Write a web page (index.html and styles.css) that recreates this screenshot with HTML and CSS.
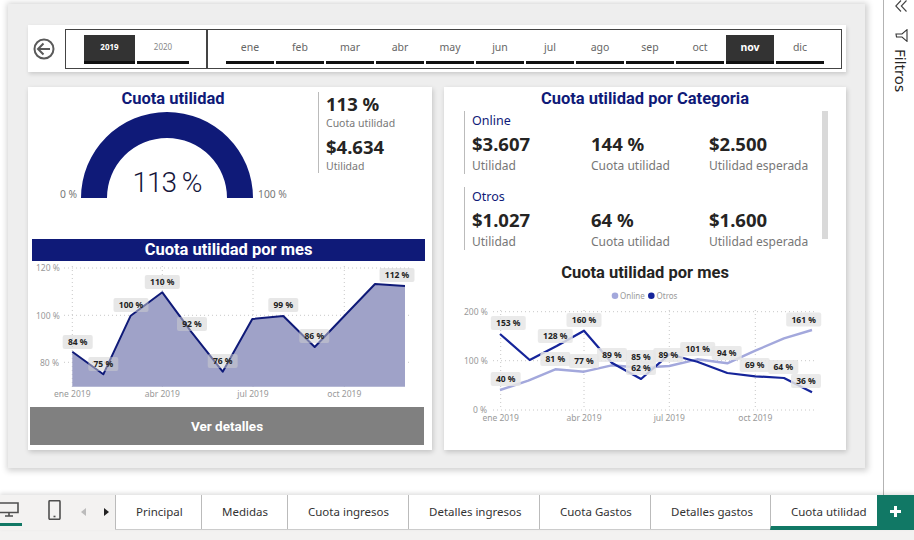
FILE: index.html
```html
<!DOCTYPE html>
<html lang="es">
<head>
<meta charset="utf-8">
<title>Cuota utilidad</title>
<link rel="stylesheet" href="styles.css">
</head>
<body>
<div class="app">
  <div class="main">
    <div class="stage">
      <div class="page">
        <div class="slicer-bar">
          <svg class="back" viewBox="0 0 22 22" width="22" height="22"><circle cx="11" cy="11" r="9.500"/><path d="M17 11H5.500M10.500 5.500 5 11l5.500 5.500"/></svg>
          <div class="slicer-box">
            <div class="years">
              <div class="tile on">2019</div>
              <div class="tile small">2020</div>
            </div>
            <div class="months">
              <div class="tile">ene</div><div class="tile">feb</div><div class="tile">mar</div><div class="tile">abr</div><div class="tile">may</div><div class="tile">jun</div><div class="tile">jul</div><div class="tile">ago</div><div class="tile">sep</div><div class="tile">oct</div><div class="tile on">nov</div><div class="tile">dic</div>
            </div>
          </div>
        </div>
        <div class="panels">
          <section class="panel left">
            <div class="top-row">
              <div class="gauge-col">
                <h2 class="title navy">Cuota utilidad</h2>
                <div class="gauge">
                  <span class="gauge-min">0 %</span>
                  <svg class="gauge-svg" viewBox="0 0 172 87" width="172" height="87"><path d="M0 87A86 86 0 0 1 172 87H146A60 60 0 0 0 26 87Z"/></svg>
                  <span class="gauge-max">100 %</span>
                  <span class="gauge-val">113 %</span>
                </div>
              </div>
              <div class="kpis">
                <div class="big">113 %</div>
                <div class="cap">Cuota utilidad</div>
                <div class="big second">$4.634</div>
                <div class="cap">Utilidad</div>
              </div>
            </div>
            <h2 class="banner">Cuota utilidad por mes</h2>
            <svg class="chart chart-a" viewBox="30 262 395 143" width="395" height="143">
              <g class="grid">
                <path d="M64 268H412M64 315.300H412M64 362.300H412M72.300 266V387M162.300 266V387M253 266V387M344.300 266V387"/>
              </g>
              <g class="axis">
                <text x="36" y="271">120 %</text><text x="36" y="318.500">100 %</text><text x="40" y="365.500">80 %</text>
                <text class="mid" x="72.300" y="397">ene 2019</text><text class="mid" x="162.300" y="397">abr 2019</text><text class="mid" x="253" y="397">jul 2019</text><text class="mid" x="344.300" y="397">oct 2019</text>
              </g>
              <path class="area" d="M72.300 351.700 103.300 374.300 130.700 315.700 162.300 292.300 191.700 332.300 222.700 371.700 252.300 319 283.300 316 314.700 347 344.300 316 375 284 405 286V386.700H72.300Z"/>
              <path class="line navy-line" d="M72.300 351.700 103.300 374.300 130.700 315.700 162.300 292.300 191.700 332.300 222.700 371.700 252.300 319 283.300 316 314.700 347 344.300 316 375 284 405 286"/>
              <g class="labels soft">
                <rect x="62.700" y="335" width="30" height="14" rx="2"/><text x="77.700" y="345">84 %</text>
                <rect x="88.300" y="357" width="30" height="14" rx="2"/><text x="103.300" y="367">75 %</text>
                <rect x="113.500" y="298" width="35" height="14" rx="2"/><text x="131" y="308">100 %</text>
                <rect x="144.800" y="275" width="35" height="14" rx="2"/><text x="162.300" y="285">110 %</text>
                <rect x="177" y="317" width="30" height="14" rx="2"/><text x="192" y="327">92 %</text>
                <rect x="207.700" y="354" width="30" height="14" rx="2"/><text x="222.700" y="364">76 %</text>
                <rect x="268.300" y="298" width="30" height="14" rx="2"/><text x="283.300" y="308">99 %</text>
                <rect x="299.300" y="329" width="30" height="14" rx="2"/><text x="314.300" y="339">86 %</text>
                <rect x="379.500" y="268" width="35" height="14" rx="2"/><text x="397" y="278">112 %</text>
              </g>
            </svg>
            <button class="details" type="button">Ver detalles</button>
          </section>
          <section class="panel right">
            <h2 class="title navy">Cuota utilidad por Categoria</h2>
            <div class="cats">
              <div class="cat-list">
                <div class="cat">
                  <div class="cat-name">Online</div>
                  <div class="cat-grid">
                    <div><div class="big">$3.607</div><div class="cap wide">Utilidad</div></div>
                    <div><div class="big">144 %</div><div class="cap wide">Cuota utilidad</div></div>
                    <div><div class="big">$2.500</div><div class="cap wide">Utilidad esperada</div></div>
                  </div>
                </div>
                <div class="cat">
                  <div class="cat-name">Otros</div>
                  <div class="cat-grid">
                    <div><div class="big">$1.027</div><div class="cap wide">Utilidad</div></div>
                    <div><div class="big">64 %</div><div class="cap wide">Cuota utilidad</div></div>
                    <div><div class="big">$1.600</div><div class="cap wide">Utilidad esperada</div></div>
                  </div>
                </div>
              </div>
              <div class="scrollbar"></div>
            </div>
            <h2 class="title dark">Cuota utilidad por mes</h2>
            <svg class="chart chart-b" viewBox="444 285 402 150" width="402" height="150">
              <circle class="dot-online" cx="615" cy="295.700" r="3.300"/><text class="legend" x="620" y="299">Online</text>
              <circle class="dot-otros" cx="651.300" cy="295.700" r="3.300"/><text class="legend" x="656.500" y="299">Otros</text>
              <g class="grid">
                <path d="M493 311.700H816M493 360.700H816M493 410H816M500.700 310V410M584 310V410M669.300 310V410M755.300 310V410"/>
              </g>
              <g class="axis">
                <text x="464" y="314.500">200 %</text><text x="464" y="364">100 %</text><text x="473" y="413">0 %</text>
                <text class="mid" x="500.700" y="421">ene 2019</text><text class="mid" x="584" y="421">abr 2019</text><text class="mid" x="669.300" y="421">jul 2019</text><text class="mid" x="755.300" y="421">oct 2019</text>
              </g>
              <path class="line online-line" d="M500 390 528.300 380.700 555.300 369.300 584 371.700 611.700 365.300 641 367.700 669.300 366 697.300 359.300 727.300 363.300 755.300 350.700 784 338.300 812 330"/>
              <path class="line otros-line" d="M500 334 529.700 360 556.700 346 584 330.700 611.700 362.700 641 379 669.300 354.300 697.300 361.700 727.300 373 755.300 376.300 784 378 812 392.300"/>
              <g class="labels firm">
                <rect x="490.800" y="316" width="35" height="14" rx="2"/><text x="508.300" y="326.300">153 %</text>
                <rect x="537.800" y="329" width="35" height="14" rx="2"/><text x="555.300" y="339">128 %</text>
                <rect x="566.500" y="313" width="35" height="14" rx="2"/><text x="584" y="323">160 %</text>
                <rect x="540.300" y="352" width="30" height="14" rx="2"/><text x="555.300" y="362">81 %</text>
                <rect x="569" y="354" width="30" height="14" rx="2"/><text x="584" y="364">77 %</text>
                <rect x="490.700" y="372" width="30" height="14" rx="2"/><text x="505.700" y="382">40 %</text>
                <rect x="597" y="348" width="30" height="14" rx="2"/><text x="612" y="358">89 %</text>
                <rect x="626" y="350" width="30" height="14" rx="2"/><text x="641" y="360">85 %</text>
                <rect x="626" y="361" width="30" height="14" rx="2"/><text x="641" y="371">62 %</text>
                <rect x="653.300" y="348" width="30" height="14" rx="2"/><text x="668.300" y="358">89 %</text>
                <rect x="680.200" y="342" width="35" height="14" rx="2"/><text x="697.700" y="352">101 %</text>
                <rect x="711.700" y="346" width="30" height="14" rx="2"/><text x="726.700" y="356">94 %</text>
                <rect x="739.700" y="358" width="30" height="14" rx="2"/><text x="754.700" y="368">69 %</text>
                <rect x="768.300" y="360" width="30" height="14" rx="2"/><text x="783.300" y="370">64 %</text>
                <rect x="791" y="374" width="30" height="14" rx="2"/><text x="806" y="384">36 %</text>
                <rect x="786.200" y="312.500" width="35" height="14" rx="2"/><text x="803.700" y="322.500">161 %</text>
              </g>
            </svg>
          </section>
        </div>
      </div>
    </div>
    <aside class="filters">
      <svg class="chev" viewBox="0 0 12 13" width="12" height="13"><path d="M6 .5.800 6 6 11.500M11.500.5 6.300 6l5.200 5.500"/></svg>
      <svg class="funnel" viewBox="0 0 13 13" width="13" height="13"><path d="M12 .7V12.300L7 8H1.500L1 5H7Z"/></svg>
      <span class="filters-label">Filtros</span>
    </aside>
  </div>
  <nav class="tabbar">
    <div class="views">
      <div class="view current">
        <svg viewBox="0 0 19 15" width="19" height="15"><path d="M0 1H18V10.500H0M9 10.500V13.500M5 14H13"/></svg>
      </div>
      <div class="view phone">
        <svg viewBox="0 0 13 20" width="13" height="20"><rect x="1" y=".7" width="11" height="18.600" rx="1"/><path d="M5.500 16.500H7.500"/></svg>
      </div>
      <span class="arrow prev"></span>
      <span class="arrow next"></span>
    </div>
    <div class="tabs">
      <div class="tab">Principal</div>
      <div class="tab">Medidas</div>
      <div class="tab">Cuota ingresos</div>
      <div class="tab">Detalles ingresos</div>
      <div class="tab">Cuota Gastos</div>
      <div class="tab">Detalles gastos</div>
      <div class="tab active">Cuota utilidad</div>
    </div>
    <div class="add"><svg viewBox="0 0 11 11" width="11" height="11"><path d="M4 0H7V4H11V7H7V11H4V7H0V4H4Z"/></svg></div>
  </nav>
  <div class="status"></div>
</div>
</body>
</html>
```

FILE: styles.css
```css
* { box-sizing: border-box; }
html, body { margin: 0; height: 100%; }
body { width: 914px; height: 540px; overflow: hidden; background: #fff; font-family: "Noto Sans", "Open Sans", sans-serif; color: #252423; }
.app { display: flex; flex-direction: column; width: 914px; height: 540px; }
.main { display: flex; height: 495px; }
.stage { width: 883px; padding: 4px 18px 0 8px; }
.page { width: 857px; height: 464px; padding: 21px 19px 0 20px; background: #eee; box-shadow: 1px 1px 6px 2px rgba(0,0,0,.18); }

.slicer-bar { display: flex; align-items: center; width: 818px; height: 47px; padding: 0 4px 0 5px; background: #fff; box-shadow: 1px 2px 4px rgba(0,0,0,.15); }
.back { flex: none; margin-right: 10px; }
.back circle, .back path { fill: none; stroke: #5a5a5a; stroke-width: 2; }
.slicer-box { display: flex; flex: 1; height: 40px; border: 1px solid #444; }
.years { display: flex; gap: 2px; width: 142px; padding: 5px 0 0 18px; border-right: 2px solid #444; }
.months { display: flex; gap: 2px; padding: 5px 0 0 18px; }
.tile { display: flex; align-items: center; justify-content: center; width: 48px; height: 29px; padding-bottom: 2px; border-bottom: 3px solid #111; font-size: 10.500px; color: #666; }
.years .tile { width: 51px; font-size: 8px; }
.years .small { width: 52px; color: #888; }
.tile.on { background: #333; color: #fff; font-weight: 700; }
.months .tile.on { font-size: 10.500px; }

.panels { display: flex; gap: 12px; margin-top: 15px; }
.panel { height: 363px; background: #fff; box-shadow: 1px 2px 5px rgba(0,0,0,.18); }
.panel.left { width: 404px; }
.panel.right { width: 402px; }
.title { margin: 0 0 -2px; font-family: Roboto, "Noto Sans", sans-serif; font-weight: 700; font-size: 16.500px; line-height: 24px; text-align: center; }
.navy { color: #0f1a78; }
.dark { margin-top: 20px; color: #252423; }

.top-row { display: flex; height: 152px; }
.gauge-col { width: 290px; }
.gauge-col .title { width: 290px; }
.gauge { position: relative; width: 172px; height: 87px; margin: 2px 0 0 53px; }
.gauge-svg { display: block; fill: #0f1a78; }
.gauge-min, .gauge-max { position: absolute; bottom: -3px; font-size: 10.300px; color: #777; white-space: nowrap; }
.gauge-min { right: 176px; }
.gauge-max { left: 177px; }
.gauge-val { position: absolute; left: 0; right: 0; bottom: -3px; text-align: center; font-family: Roboto, sans-serif; font-weight: 300; font-size: 28px; letter-spacing: -1px; line-height: 36px; color: #14143a; }
.kpis { width: 114px; height: 81px; margin-top: 5px; padding-left: 7px; border-left: 1px solid #bbb; }
.big { font-family: "Noto Sans", sans-serif; font-weight: 700; font-size: 18.500px; line-height: 24px; color: #252423; }
.cap { font-size: 10.500px; line-height: 14px; color: #777; white-space: nowrap; }
.second { margin-top: 5px; }
.cap.wide { font-size: 12px; line-height: 19px; }

.banner { width: 393px; height: 22px; margin: 0 0 0 4px; background: #0f1a78; color: #fff; font-family: Roboto, sans-serif; font-weight: 700; font-size: 16.500px; line-height: 21px; text-align: center; }
.chart { display: block; }
.chart-a { margin: 1px 0 0 2px; }
.details { display: block; width: 394px; height: 38px; margin: 2px 0 0 2px; border: 0; background: #808080; color: #fff; font-family: Roboto, sans-serif; font-weight: 700; font-size: 13.500px; }

.grid path { fill: none; stroke: #c8c8c8; stroke-width: 1; stroke-dasharray: 1 3; }
.axis text { font-size: 8.500px; fill: #999; }
.axis .mid { text-anchor: middle; }
.area { fill: #9fa2c8; }
.line { fill: none; stroke-width: 2; stroke-linejoin: round; }
.navy-line { stroke: #0f1a78; }
.otros-line { stroke: #15249a; stroke-width: 2.200; }
.online-line { stroke: #a3a8dc; stroke-width: 2.400; }
.labels rect { fill: #e6e6e6; }
.soft rect { fill: #d0d0d0; fill-opacity: .5; }
.firm rect { fill-opacity: .85; }
.labels text { font-size: 8.500px; font-weight: 700; fill: #222; text-anchor: middle; }
.legend { font-size: 8px; fill: #999; }
.dot-online { fill: #a3a8dc; }
.dot-otros { fill: #15249a; }

.cats { display: flex; height: 130px; margin-top: 2px; }
.cat-list { width: 378px; padding-left: 20px; }
.cat { height: 63px; margin-bottom: 13px; padding-left: 7px; border-left: 1px solid #bbb; }
.cat-name { padding-top: 1px; font-size: 12.500px; line-height: 18px; color: #0f1a78; }
.cat-grid { display: grid; grid-template-columns: 119px 118px 1fr; margin-top: 2px; white-space: nowrap; }
.scrollbar { width: 6px; height: 128px; background: #d9d9d9; }
.chart-b { margin-top: 2px; }

.filters { position: relative; flex: 1; border-left: 1px solid #b3b3b3; }
.chev { position: absolute; left: 11px; top: 0; }
.chev path { fill: none; stroke: #444; stroke-width: 1.100; }
.funnel { position: absolute; left: 11px; top: 29px; }
.funnel path { fill: none; stroke: #333; stroke-width: 1.100; }
.filters-label { position: absolute; left: 8px; top: 49px; font-size: 15px; line-height: 18px; color: #252423; writing-mode: vertical-rl; }

.tabbar { display: flex; position: relative; height: 35px; background: #f3f2f1; box-shadow: 0 -2px 4px rgba(0,0,0,.12); }
.views { position: relative; width: 115px; height: 35px; }
.view { position: absolute; top: 5px; }
.view svg { display: block; fill: none; stroke: #4f4f4f; stroke-width: 1.600; }
.view.current { left: 0; width: 22px; height: 26px; padding-top: 2px; border-bottom: 3px solid #117865; }
.view.phone { left: 48px; top: 5px; }
.arrow { position: absolute; top: 13px; width: 0; height: 0; border-top: 4px solid transparent; border-bottom: 4px solid transparent; }
.arrow.prev { left: 81px; border-right: 5px solid #bbb; }
.arrow.next { left: 104px; border-left: 5px solid #222; }
.tabs { display: grid; grid-template-columns: 86px 86px 121px 131px 111px 120px 107px; width: 762px; height: 35px; background: #fff; border-bottom: 1px solid #ccc; }
.tab { padding: 7px 0 0 20px; border-left: 1px solid #bbb; font-size: 11.500px; line-height: 20px; color: #333; white-space: nowrap; }
.tab.active { height: 35px; margin-bottom: -1px; border-bottom: 4px solid #117865; }
.add { display: flex; flex: 1; align-items: center; justify-content: center; padding-bottom: 2px; background: #117865; fill: #fff; }
.add svg { display: block; }
.status { flex: 1; background: #f3f2f1; }
```
